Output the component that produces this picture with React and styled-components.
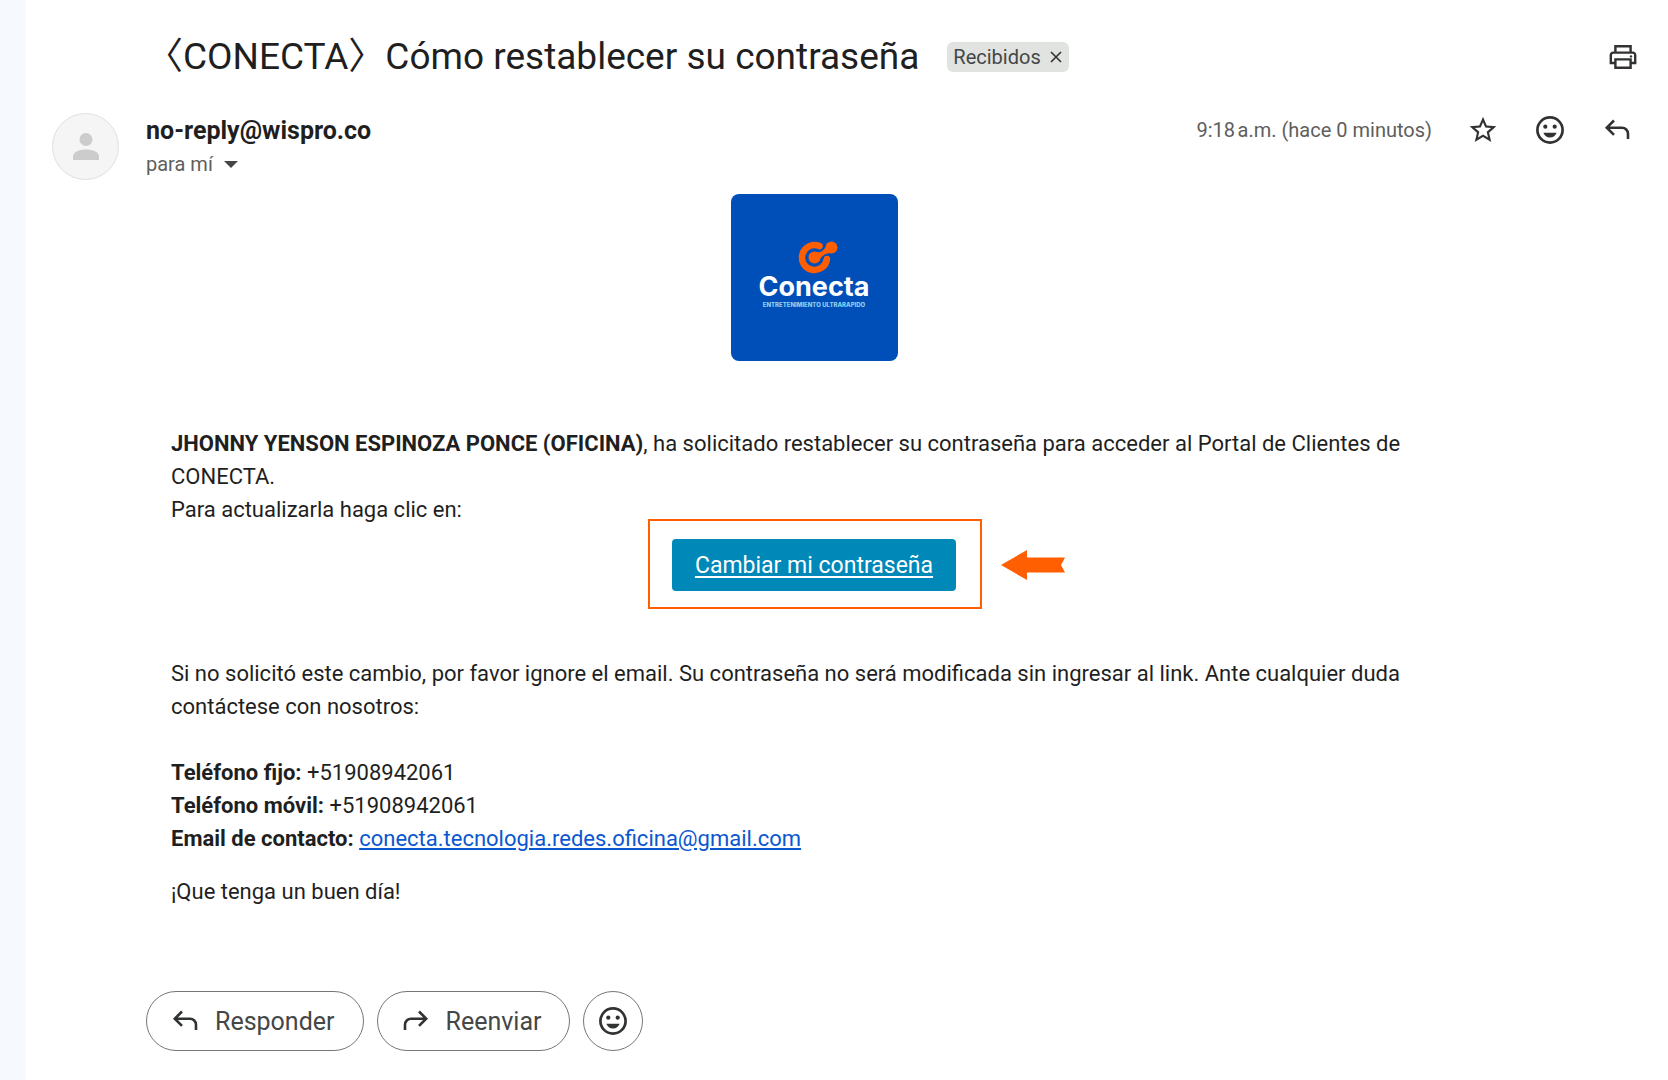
import React from "react";
import styled, { createGlobalStyle } from "styled-components";

const GlobalStyle = createGlobalStyle`
  * {
    box-sizing: border-box;
  }

  body {
    margin: 0;
    background-color: #ffffff;
    color: #1f1f1f;
    font-family: Roboto, "Noto Sans CJK JP", sans-serif;
  }
`;

const Page = styled.div`
  display: flex;
  min-height: 100vh;
`;

const Rail = styled.div`
  flex: none;
  width: 26px;
  background-color: #f6fafe;
`;

const Thread = styled.main`
  flex: 1;
  min-width: 0;
  padding: 30px 0 28px 26px;
`;

const SubjectRow = styled.header`
  display: flex;
  align-items: center;
  padding: 0 29px 0 94px;
  height: 54px;
`;

const Subject = styled.h1`
  margin: 0 28px 0 0;
  font-size: 37px;
  font-weight: 400;
  line-height: 54px;
`;

const Chip = styled.span`
  display: flex;
  align-items: center;
  gap: 7px;
  height: 30px;
  padding: 0 5px 0 6px;
  border-radius: 6px;
  background-color: #e1e3e1;
  color: #444746;
  font-size: 20px;
`;

const IconButton = styled.button`
  display: flex;
  align-items: center;
  justify-content: center;
  width: ${({ $size }) => $size || 32}px;
  height: ${({ $size }) => $size || 32}px;
  margin-left: ${({ $push }) => ($push ? "auto" : "0")};
  padding: 0;
  border: none;
  background-color: transparent;
  color: #303332;
  cursor: pointer;
`;

const SenderRow = styled.div`
  display: flex;
  align-items: flex-start;
  margin-top: 29px;
  padding-right: 35px;
`;

const Avatar = styled.div`
  display: flex;
  align-items: center;
  justify-content: center;
  flex: none;
  width: 67px;
  height: 67px;
  margin-right: 27px;
  border: 1px solid #e0e0e0;
  border-radius: 50%;
  background-color: #f5f5f5;
`;

const Sender = styled.div`
  flex: 1;
`;

const SenderName = styled.div`
  font-size: 25px;
  font-weight: 700;
  line-height: 36px;
`;

const Recipient = styled.button`
  display: flex;
  align-items: center;
  gap: 11px;
  padding: 0;
  border: none;
  background-color: transparent;
  color: #5e5e5e;
  font-family: inherit;
  font-size: 20px;
  line-height: 30px;
  cursor: pointer;
`;

const Actions = styled.div`
  display: flex;
  align-items: center;
  gap: 35px;
  height: 34px;
`;

const Time = styled.time`
  color: #5e5e5e;
  font-size: 20px;
`;

const Body = styled.article`
  display: flex;
  flex-direction: column;
  margin-right: 183px;
  padding: 0 28px 0 119px;
  font-size: 22px;
  line-height: 33px;

  p {
    margin: 0;
  }
`;

const Logo = styled.div`
  align-self: center;
  display: flex;
  flex-direction: column;
  align-items: center;
  width: 167px;
  height: 167px;
  margin: 14px 0 66px;
  padding-top: 47px;
  border-radius: 8px;
  background-color: #004fb9;
  color: #ffffff;
  font-family: Inter, sans-serif;
`;

const LogoName = styled.div`
  font-size: 27px;
  font-weight: 700;
  line-height: 26px;
`;

const LogoTagline = styled.div`
  color: #8fd0ee;
  font-size: 6px;
  font-weight: 800;
  line-height: 10px;
`;

const Highlight = styled.div`
  align-self: center;
  position: relative;
  margin: 13px 0 66px;

  &::before {
    content: "";
    position: absolute;
    inset: -20px -26px -18px -24px;
    border: 2px solid #ff5f00;
    pointer-events: none;
  }

  svg {
    position: absolute;
    left: calc(100% + 45px);
    top: 11px;
  }
`;

const ChangeLink = styled.a`
  display: block;
  padding: 10px 23px 9px;
  border-radius: 4px;
  background-color: #0088b8;
  color: #ffffff;
  font-size: 23px;
  text-underline-offset: 3px;
`;

const Contact = styled.div`
  margin: 33px 0 20px;

  a {
    color: #0b57d0;
  }
`;

const Replies = styled.footer`
  display: flex;
  gap: 13px;
  margin-top: 83px;
  padding-left: 94px;
`;

const ReplyButton = styled.button`
  display: flex;
  align-items: center;
  justify-content: center;
  gap: 17px;
  height: 60px;
  min-width: 60px;
  padding: ${({ $round }) => ($round ? "0" : "0 28px 0 25px")};
  border: 1px solid #747775;
  border-radius: 30px;
  background-color: #ffffff;
  color: #444746;
  font-family: inherit;
  font-size: 25px;
  cursor: pointer;

  svg {
    color: #303332;
  }
`;

function ReplyIcon({ forward }) {
  return (
    <svg width="26" height="26" viewBox="0 0 26 26" fill="none" stroke="currentColor" strokeWidth="2.6">
      <g transform={forward ? "translate(26 0) scale(-1 1)" : undefined}>
        <path d="M10 3.5 2.8 10.7 10 17.9M3 10.7H18a6 6 0 0 1 6 6V22" />
      </g>
    </svg>
  );
}

function SmileIcon() {
  return (
    <svg width="30" height="30" viewBox="0 0 30 30">
      <circle cx="15" cy="15" r="12.6" fill="none" stroke="currentColor" strokeWidth="2.7" />
      <circle cx="10.3" cy="11.7" r="2.1" fill="currentColor" />
      <circle cx="19.7" cy="11.7" r="2.1" fill="currentColor" />
      <path d="M8.4 17.8h13.2c-1 3-3.5 4.7-6.6 4.7s-5.6-1.7-6.6-4.7z" fill="currentColor" />
    </svg>
  );
}

function StarIcon() {
  return (
    <svg width="32" height="32" viewBox="0 0 24 24" fill="currentColor">
      <path d="M22 9.24l-7.19-.62L12 2 9.19 8.63 2 9.24l5.46 4.73L5.82 21 12 17.27 18.18 21l-1.63-7.03L22 9.24zM12 15.4l-3.76 2.27 1-4.28-3.32-2.88 4.38-.38L12 6.1l1.71 4.04 4.38.38-3.32 2.88 1 4.28L12 15.4z" />
    </svg>
  );
}

function PrintIcon() {
  return (
    <svg width="28" height="26" viewBox="0 0 28 26" fill="none" stroke="currentColor" strokeWidth="2.4">
      <path d="M6.4 8V2.2h15.2V8M6.4 19H1.8V11a2.4 2.4 0 0 1 2.4-2.4h19.6a2.4 2.4 0 0 1 2.4 2.4V19h-4.6M6.4 15.4h15.2v8.4H6.4z" />
      <circle cx="22" cy="12.4" r="1.2" fill="currentColor" stroke="none" />
    </svg>
  );
}

function PersonIcon() {
  return (
    <svg width="28" height="30" viewBox="0 0 28 30" fill="#cccccc">
      <circle cx="14" cy="7.5" r="6.5" />
      <path d="M1 28v-3.5C1 20 7.5 17.5 14 17.5S27 20 27 24.5V28z" />
    </svg>
  );
}

function LogoMark() {
  return (
    <svg width="47" height="33" viewBox="-8 0 47 33" fill="#ff5f00">
      <path
        d="M20.5 5.1A12.5 12.5 0 1 0 27.9 18"
        fill="none"
        stroke="#ff5f00"
        strokeWidth="6.5"
        strokeLinecap="round"
      />
      <circle cx="15.5" cy="16.5" r="6" />
      <path d="M18 11.2Q23 12 26.8 6L32.5 12Q25 12 21.4 17.5z" />
      <circle cx="32.5" cy="6.5" r="6" />
    </svg>
  );
}

function App() {
  return (
    <Page>
      <GlobalStyle />
      <Rail />
      <Thread>
        <SubjectRow>
          <Subject>〈CONECTA〉Cómo restablecer su contraseña</Subject>
          <Chip>
            Recibidos
            <IconButton $size={16} aria-label="Quitar etiqueta">
              <svg width="12" height="12" viewBox="0 0 12 12" stroke="currentColor" strokeWidth="1.6">
                <path d="M1 1l10 10M11 1 1 11" />
              </svg>
            </IconButton>
          </Chip>
          <IconButton $push aria-label="Imprimir">
            <PrintIcon />
          </IconButton>
        </SubjectRow>

        <SenderRow>
          <Avatar>
            <PersonIcon />
          </Avatar>
          <Sender>
            <SenderName>no-reply@wispro.co</SenderName>
            <Recipient>
              para mí
              <svg width="14" height="7" viewBox="0 0 14 7" fill="#444746">
                <path d="M0 0h14L7 7z" />
              </svg>
            </Recipient>
          </Sender>
          <Actions>
            <Time>9:18&#8239;a.m. (hace 0 minutos)</Time>
            <IconButton aria-label="Destacar">
              <StarIcon />
            </IconButton>
            <IconButton aria-label="Reaccionar">
              <SmileIcon />
            </IconButton>
            <IconButton aria-label="Responder">
              <ReplyIcon />
            </IconButton>
          </Actions>
        </SenderRow>

        <Body>
          <Logo>
            <LogoMark />
            <LogoName>Conecta</LogoName>
            <LogoTagline>ENTRETENIMIENTO ULTRARAPIDO</LogoTagline>
          </Logo>
          <p>
            <b>JHONNY YENSON ESPINOZA PONCE (OFICINA)</b>, ha solicitado
            restablecer su contraseña para acceder al Portal de Clientes de
            CONECTA.
          </p>
          <p>Para actualizarla haga clic en:</p>
          <Highlight>
            <ChangeLink href="#cambiar">Cambiar mi contraseña</ChangeLink>
            <svg width="64" height="30" viewBox="0 0 64 30" fill="#ff5f00">
              <path d="M0 15 26 0v7.5h38L60 15l4 7.5H26V30z" />
            </svg>
          </Highlight>
          <p>
            Si no solicitó este cambio, por favor ignore el email. Su
            contraseña no será modificada sin ingresar al link. Ante cualquier
            duda contáctese con nosotros:
          </p>
          <Contact>
            <p>
              <b>Teléfono fijo:</b> +51908942061
            </p>
            <p>
              <b>Teléfono móvil:</b> +51908942061
            </p>
            <p>
              <b>Email de contacto:</b>{" "}
              <a href="mailto:conecta.tecnologia.redes.oficina@gmail.com">
                conecta.tecnologia.redes.oficina@gmail.com
              </a>
            </p>
          </Contact>
          <p>¡Que tenga un buen día!</p>
        </Body>

        <Replies>
          <ReplyButton>
            <ReplyIcon />
            Responder
          </ReplyButton>
          <ReplyButton>
            <ReplyIcon forward />
            Reenviar
          </ReplyButton>
          <ReplyButton $round aria-label="Reaccionar">
            <SmileIcon />
          </ReplyButton>
        </Replies>
      </Thread>
    </Page>
  );
}

export default App;
